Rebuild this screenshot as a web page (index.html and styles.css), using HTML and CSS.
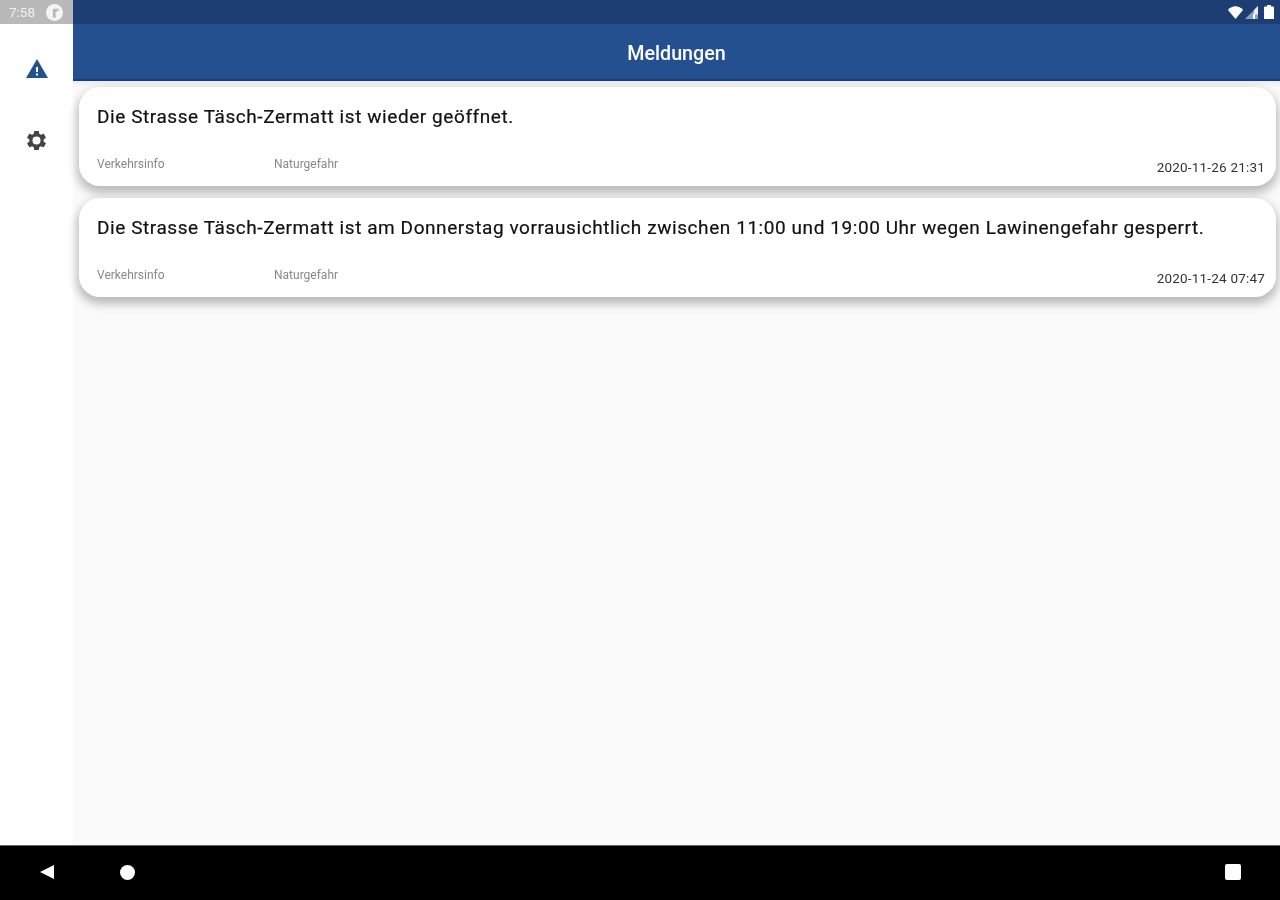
FILE: index.html
```html
<!DOCTYPE html>
<html lang="de">
<head>
<meta charset="utf-8">
<title>Meldungen</title>
<link rel="stylesheet" href="styles.css">
</head>
<body>
<div class="screen">
  <div class="content">
    <aside class="rail">
      <div class="rail-status">
        <span class="time">7:58</span>
        <svg class="status-badge" viewBox="0 0 16 16"><circle cx="8" cy="8" r="8" fill="#f4f4f4"/><path d="M6.500 4.500h6l-2.500 3H9v5.500H6.500z" fill="#b8b8b8"/></svg>
      </div>
      <nav class="rail-items">
        <button class="rail-btn" aria-label="Meldungen">
          <svg class="icon" viewBox="0 0 24 24"><path d="M1 21 12 2l11 19z" fill="#23508f"/><path d="M11 10h2v5h-2zM11 16.500h2v2h-2z" fill="#fff"/></svg>
        </button>
        <button class="rail-btn" aria-label="Einstellungen">
          <svg class="icon gear" viewBox="0 0 24 24"><path fill="#444" d="M19.430 12.980c.04-.32.07-.64.07-.98s-.03-.66-.07-.98l2.110-1.650c.19-.15.240-.42.120-.64l-2-3.460c-.12-.22-.39-.3-.61-.22l-2.490 1c-.52-.4-1.080-.73-1.690-.98l-.38-2.650C14.460 2.180 14.250 2 14 2h-4c-.25 0-.46.180-.49.420l-.38 2.650c-.61.25-1.170.59-1.690.98l-2.490-1c-.23-.09-.49 0-.61.220l-2 3.460c-.13.220-.07.490.12.640l2.110 1.650c-.04.320-.07.650-.07.980s.03.660.07.980l-2.110 1.650c-.19.150-.24.420-.12.640l2 3.460c.12.220.39.300.61.220l2.490-1c.52.400 1.080.730 1.690.980l.38 2.650c.03.240.24.420.49.420h4c.25 0 .46-.180.49-.420l.38-2.650c.61-.25 1.170-.59 1.690-.98l2.490 1c.23.090.49 0 .61-.220l2-3.460c.12-.22.07-.49-.12-.64l-2.110-1.650zM12 16.200a4.200 4.200 0 1 1 0-8.400 4.200 4.200 0 0 1 0 8.400z"/></svg>
        </button>
      </nav>
    </aside>
    <main class="main">
      <div class="status-bar">
        <svg class="sys wifi" viewBox="0 0 15 13"><path d="M0 4C4-1 11-1 15 4L7.500 13z" fill="#fff"/></svg>
        <svg class="sys signal" viewBox="0 0 13 13"><path d="M13 0v13H0z" fill="#8ea0ba"/><path d="M13 0v8.500H9V4z" fill="#e8ecf2"/><path d="M8 8h2v5H8z" fill="#fff"/></svg>
        <svg class="sys battery" viewBox="0 0 10 14"><path d="M3 0h4v1.500h2a1 1 0 0 1 1 1V14H0V2.500a1 1 0 0 1 1-1h2z" fill="#fff"/></svg>
      </div>
      <header class="app-bar"><h1 class="title">Meldungen</h1></header>
      <section class="list">
        <article class="card">
          <p class="message">Die Strasse Täsch-Zermatt ist wieder geöffnet.</p>
          <div class="meta">
            <span class="tag tag-first">Verkehrsinfo</span>
            <span class="tag">Naturgefahr</span>
            <time class="date">2020-11-26 21:31</time>
          </div>
        </article>
        <article class="card">
          <p class="message">Die Strasse Täsch-Zermatt ist am Donnerstag vorrausichtlich zwischen 11:00 und 19:00 Uhr wegen Lawinengefahr gesperrt.</p>
          <div class="meta">
            <span class="tag tag-first">Verkehrsinfo</span>
            <span class="tag">Naturgefahr</span>
            <time class="date">2020-11-24 07:47</time>
          </div>
        </article>
      </section>
    </main>
  </div>
  <footer class="nav-bar">
    <div class="nav-left">
      <svg class="nav-back" viewBox="0 0 16 16"><path d="M1 8 15 1v14z" fill="#fff"/></svg>
      <span class="nav-home"></span>
    </div>
    <span class="nav-recent"></span>
  </footer>
</div>
</body>
</html>
```
FILE: styles.css
```css
* { box-sizing: border-box; }
html, body { margin: 0; padding: 0; }
body {
  width: 1280px;
  height: 900px;
  overflow: hidden;
  font-family: Roboto, "Liberation Sans", sans-serif;
  background: #fff;
}
.screen { display: flex; flex-direction: column; height: 900px; }
.content { display: flex; flex: 1; min-height: 0; }

.rail {
  width: 73px;
  flex: none;
  background: #fff;
  display: flex;
  flex-direction: column;
}
.rail-status {
  height: 24px;
  background: #b9b9b9;
  display: flex;
  align-items: center;
  padding-left: 9px;
  gap: 11px;
}
.time { font-size: 13.500px; color: #f0f0f0; filter: blur(.7px); }
.status-badge { width: 17px; height: 17px; filter: blur(.5px); }
.rail-items {
  display: flex;
  flex-direction: column;
  align-items: center;
  padding-top: 31px;
  gap: 45px;
}
.rail-btn {
  width: 26px;
  height: 27px;
  padding: 0;
  border: 0;
  background: none;
  display: flex;
  align-items: center;
  justify-content: center;
}
.icon { width: 24px; height: 24px; filter: blur(.5px); }
.gear { width: 23px; height: 23px; }

.main {
  flex: 1;
  min-width: 0;
  display: flex;
  flex-direction: column;
  background: #fafafa;
}
.status-bar {
  height: 24px;
  flex: none;
  background: #1c3e73;
  display: flex;
  align-items: center;
  justify-content: flex-end;
  gap: 2px;
  padding-right: 6px;
}
.sys { display: block; filter: blur(.4px); }
.wifi { width: 15px; height: 13px; }
.signal { width: 13px; height: 13px; }
.battery { width: 10px; height: 14px; margin-left: 4px; }
.app-bar {
  height: 57px;
  flex: none;
  background: #24508f;
  border-bottom: 2px solid #153f85;
  display: flex;
  align-items: center;
  justify-content: center;
  padding-top: 4px;
}
.title {
  margin: 0;
  font-size: 19.700px;
  font-weight: 500;
  color: #fff;
  filter: blur(.6px);
}
.list {
  flex: 1;
  display: flex;
  flex-direction: column;
  gap: 11.500px;
  padding: 6px 4px 0 6px;
  background: linear-gradient(#ececec, #fafafa 6px);
}
.card {
  height: 99px;
  background: #fff;
  border-radius: 21px;
  box-shadow: 0 5px 10px 2px rgba(0,0,0,.26);
  padding: 19px 11px 0 18px;
  display: flex;
  flex-direction: column;
  filter: blur(.5px);
}
.message {
  margin: 0;
  height: 21px;
  line-height: 21px;
  font-size: 19px;
  letter-spacing: .57px;
  color: #111;
  white-space: nowrap;
  -webkit-text-stroke: .2px #111;
  filter: blur(.4px);
}
.meta {
  display: flex;
  align-items: flex-end;
  margin-top: 19px;
  height: 31px;
}
.tag {
  font-size: 12px;
  line-height: 13px;
  color: #888;
  margin-bottom: 6px;
  filter: blur(.5px);
}
.tag-first { width: 177px; }
.date {
  margin-left: auto;
  font-size: 13.500px;
  line-height: 15px;
  letter-spacing: .2px;
  color: #333;
  filter: blur(.4px);
  margin-bottom: 2px;
}

.nav-bar {
  height: 55px;
  flex: none;
  background: #000;
  border-top: 1px solid #666;
  display: flex;
  align-items: center;
  justify-content: space-between;
  padding: 0 39px 2px;
}
.nav-left { display: flex; align-items: center; gap: 65px; }
.nav-back { width: 16px; height: 16px; filter: blur(.4px); }
.nav-home { width: 15px; height: 15px; background: #fff; border-radius: 50%; filter: blur(.4px); }
.nav-recent { width: 16px; height: 16px; background: #fff; border-radius: 2px; filter: blur(.4px); }
```
